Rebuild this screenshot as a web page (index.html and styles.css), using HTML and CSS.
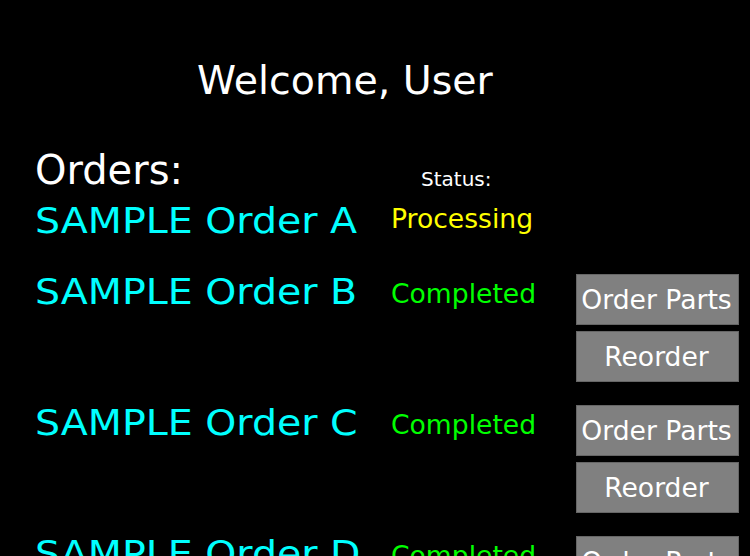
FILE: index.html
```html
<!DOCTYPE html>
<html>
<head>
<meta charset="utf-8">
<link rel="stylesheet" href="styles.css">
</head>
<body>
<div class="page">
  <h1 class="welcome">Welcome, User</h1>
  <div class="head-row">
    <div class="orders-title">Orders:</div>
    <div class="status-title">Status:</div>
  </div>
  <div class="rows">
    <div class="row row-first">
      <div class="name">SAMPLE Order A</div>
      <div class="status processing status-first">Processing</div>
      <div class="actions"></div>
    </div>
    <div class="row">
      <div class="name">SAMPLE Order B</div>
      <div class="status completed">Completed</div>
      <div class="actions">
        <button class="btn">Order Parts</button>
        <button class="btn">Reorder</button>
      </div>
    </div>
    <div class="row">
      <div class="name">SAMPLE Order C</div>
      <div class="status completed">Completed</div>
      <div class="actions">
        <button class="btn">Order Parts</button>
        <button class="btn">Reorder</button>
      </div>
    </div>
    <div class="row">
      <div class="name">SAMPLE Order D</div>
      <div class="status completed">Completed</div>
      <div class="actions">
        <button class="btn">Order Parts</button>
        <button class="btn">Reorder</button>
      </div>
    </div>
  </div>
</div>
</body>
</html>
```
FILE: styles.css
```css
html, body {
  margin: 0;
  padding: 0;
  background: #000;
  height: 100%;
  overflow: hidden;
}
body {
  font-family: "DejaVu Sans", sans-serif;
  color: #fff;
}
.page {
  padding-left: 35px;
}
.welcome {
  margin: 57px 0 0 0;
  padding-left: 162px;
  font-size: 39.5px;
  font-weight: normal;
  line-height: 46px;
  color: #fff;
}
.head-row {
  display: grid;
  grid-template-columns: 356px 186px;
  align-items: end;
  margin-top: 44px;
}
.orders-title {
  font-size: 40px;
  line-height: 46px;
}
.status-title {
  font-size: 20px;
  line-height: 27px;
  padding-left: 30px;
}
.rows {
  display: flex;
  flex-direction: column;
  gap: 23px;
  margin-top: 10px;
}
.row {
  display: grid;
  grid-template-columns: 356px 185px 163px;
  align-items: start;
}
.row-first {
  min-height: 48px;
}
.name {
  font-size: 39.5px;
  line-height: 33px;
  color: #00ffff;
  white-space: nowrap;
  transform: scaleY(0.92);
  transform-origin: 0 30px;
}
.status {
  font-size: 26.6px;
  line-height: 30px;
  margin-top: 5px;
  white-space: nowrap;
}
.status-first {
  margin-top: 1px;
}
.processing { color: #ffff00; }
.completed { color: #00ff00; }
.actions {
  display: flex;
  flex-direction: column;
  gap: 6px;
}
.btn {
  height: 51px;
  margin: 0;
  padding: 0 2px 0 0;
  background: #808080;
  border: 1px solid #666;
  color: #fff;
  font-family: "DejaVu Sans", sans-serif;
  font-size: 26.6px;
  line-height: 30px;
  text-align: center;
  white-space: nowrap;
}
```
